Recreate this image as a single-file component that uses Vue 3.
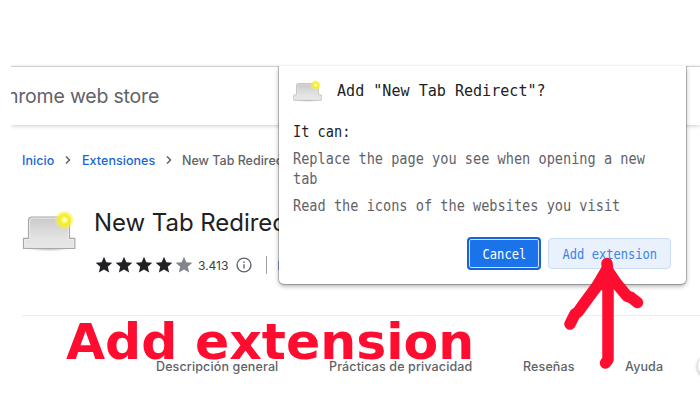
<script setup>
const tabs = [
  { label: 'Descripción general', cls: 'overview' },
  { label: 'Prácticas de privacidad', cls: 'privacy' },
  { label: 'Reseñas', cls: 'reviews' },
  { label: 'Ayuda', cls: 'help' },
]
const stars = [true, true, true, true, false]
</script>

<template>
  <svg class="defs" width="0" height="0">
    <defs>
      <linearGradient id="metal" x1="0" y1="0" x2="0" y2="1">
        <stop offset="0" stop-color="#c9c9c9" />
        <stop offset="0.7" stop-color="#e4e4e4" />
        <stop offset="1" stop-color="#e6e6e6" />
      </linearGradient>
      <radialGradient id="glow">
        <stop offset="0" stop-color="#fffff0" />
        <stop offset="0.2" stop-color="#fffba0" />
        <stop offset="0.42" stop-color="#f8ee1c" />
        <stop offset="0.65" stop-color="#f8ee30" stop-opacity="0.8" />
        <stop offset="1" stop-color="#fbf560" stop-opacity="0" />
      </radialGradient>
      <radialGradient id="floor">
        <stop offset="0" stop-color="#777" stop-opacity="0.5" />
        <stop offset="1" stop-color="#999" stop-opacity="0" />
      </radialGradient>
      <symbol id="tab-icon" viewBox="0 0 56 44">
        <ellipse cx="27" cy="40" rx="23" ry="2.500" fill="url(#floor)" />
        <path d="M1.500 39.300V29.300H6.500V11.500Q6.500 8 10 8H44Q47.500 8 47.500 11.500V29.300H52.800V39.300Z" fill="url(#metal)" stroke="#a8a8a8" stroke-width="1.200" />
        <path d="M2.700 38.200V30.500H7.700V12Q7.700 9.200 10.500 9.200H43.500Q46.300 9.200 46.300 12V30.500H51.600V38.200Z" fill="none" stroke="#ededed" stroke-width="0.900" />
        <circle cx="42.500" cy="11" r="10" fill="url(#glow)" />
      </symbol>
    </defs>
  </svg>
  <main class="shot">
    <section class="store">
      <header class="bar"><span class="brand">chrome web store</span></header>
      <nav class="crumbs">
        <a class="c1">Inicio</a>
        <svg width="6" height="10" viewBox="0 0 6 10"><path d="M1 1.500l3.500 3.500-3.500 3.500" /></svg>
        <a class="c2">Extensiones</a>
        <svg width="6" height="10" viewBox="0 0 6 10"><path d="M1 1.500l3.500 3.500-3.500 3.500" /></svg>
        <span class="c3">New Tab Redirect</span>
      </nav>
      <div class="product">
        <svg class="picture" width="56" height="44"><use href="#tab-icon" /></svg>
        <div class="info">
          <h1>New Tab Redirect</h1>
          <div class="rating">
            <svg v-for="(on, i) in stars" :key="i" class="star" :class="{ off: !on }" width="20" height="20" viewBox="0 0 24 24">
              <path d="M12 17.270 18.180 21l-1.640-7.030L22 9.240l-7.190-.61L12 2 9.190 8.630 2 9.240l5.460 4.730L5.820 21z" />
            </svg>
            <span class="count">3.413</span>
            <svg class="about" width="16" height="16" viewBox="0 0 16 16">
              <circle cx="8" cy="8" r="6.900" /><path d="M8 7.200v4.300M8 4.400v1.500" />
            </svg>
            <i class="sep"></i><i class="link-edge"></i>
          </div>
        </div>
      </div>
      <div class="tabs">
        <span v-for="t in tabs" :key="t.label" :class="t.cls">{{ t.label }}</span>
        <i class="round"></i>
      </div>
    </section>

    <div class="dialog">
      <div class="title">
        <svg width="30" height="24"><use href="#tab-icon" /></svg>
        <span class="mono">Add "New Tab Redirect"?</span>
      </div>
      <div class="can"><span class="mono">It can:</span></div>
      <p class="mono">Replace the page you see when opening a new<br>tab</p>
      <p class="mono second">Read the icons of the websites you visit</p>
      <div class="actions">
        <button class="cancel"><span class="mono">Cancel</span></button>
        <button class="add"><span class="mono">Add extension</span></button>
      </div>
    </div>

    <div class="caption">Add extension</div>
    <svg class="arrow" width="90" height="130" viewBox="0 0 90 130">
      <path class="stem" d="M47 13.500L48 24V109.500L45.500 113" />
      <path class="wing" d="M46 21L37 36L23 55L18 62L15 64L10 74" />
      <path class="wing" d="M48 21L57 34L67 46L71 47.500L77.500 52.500" />
      <path class="head" d="M47 16L41 27L38 34L47 38L56 32Z" />
    </svg>
  </main>
</template>

<style>
body { margin: 0; background: #fff; }
</style>

<style scoped>
.defs { position: absolute; }
.shot { position: relative; width: 700px; height: 400px; overflow: hidden; background: #fff; font-family: Inter, "Open Sans", sans-serif; }
.store { margin-left: 11px; padding-top: 66px; overflow: hidden; }
.bar { box-sizing: border-box; height: 59px; border-top: 1px solid #d0d0d0; overflow: hidden; box-shadow: 0 1px 4px rgba(0,0,0,.2); display: flex; align-items: center; }
.brand { color: #5f6368; font-size: 19.500px; letter-spacing: -.2px; margin-left: -15px; white-space: nowrap; }
.crumbs { display: flex; align-items: center; height: 20px; padding: 25px 0 0 11px; font-size: 12.500px; font-weight: 500; color: #5f6368; white-space: nowrap; }
.crumbs a { color: #1967d2; }
.crumbs svg { fill: none; stroke: #5f6368; stroke-width: 1.500; margin: 0 11px; }
.c1 { width: 32px; letter-spacing: .05px; }
.c2 { width: 73px; letter-spacing: .05px; }
.c3 { margin-left: -1px; }
.product { display: flex; padding-top: 36px; height: 109px; border-bottom: 1px solid #eceef0; margin-left: 11px; }
.picture { margin-top: 3px; }
.info { margin-left: 16px; }
h1 { margin: 0; font-size: 24px; line-height: 34px; font-weight: 400; letter-spacing: -.05px; color: #202124; white-space: nowrap; }
.rating { display: flex; align-items: center; height: 20px; margin-top: 15px; }
.star { fill: #202124; }
.star.off { fill: #80868b; }
.count { font-size: 12px; width: 31px; color: #3c4043; margin-left: 4px; }
.about { fill: none; stroke: #5f6368; stroke-width: 1.400; margin-left: 7px; }
.sep { width: 1px; height: 18px; background: #9aa0a6; margin-left: 14px; }
.link-edge { width: 6px; height: 9px; background: #8ab4f8; margin-left: 11px; }
.tabs { display: flex; align-items: center; height: 30px; padding: 35px 0 0 145px; color: #5f6368; font-size: 12.500px; font-weight: 500; letter-spacing: .13px; white-space: nowrap; }
.tabs > * { flex: none; }
.overview { width: 173px; }
.privacy { width: 194px; }
.reviews { width: 102px; }
.help { width: 72px; }
.round { width: 20px; height: 20px; border-radius: 50%; border: 1px solid #ddd; box-shadow: 0 1px 3px rgba(0,0,0,.3); }

.mono { display: inline-block; font-family: "DejaVu Sans Mono", monospace; transform-origin: left center; white-space: nowrap; }
.dialog { position: absolute; left: 279px; top: 66px; width: 407px; height: 218px; box-sizing: border-box; padding: 11px 15px 0 14px; background: #fff; border-radius: 0 0 5px 5px; box-shadow: 0 0 0 1px rgba(0,0,0,.2), 0 2px 5px rgba(0,0,0,.35); clip-path: inset(0 -10px -12px -10px); }
.title { display: flex; height: 26px; align-items: center; color: #202124; font-size: 16.500px; }
.title svg { margin: 1px 14px 0 0; }
.title .mono { transform: scaleX(.913); }
.can { margin-top: 17px; height: 24px; line-height: 24px; font-size: 15px; color: #202124; }
.can .mono { transform: scaleX(.908); }
p { margin: 5px 0 0; font-size: 15px; line-height: 20px; color: #5f6368; transform: scaleX(.906); }
p.second { margin-top: 7px; }
.actions { display: flex; justify-content: flex-end; gap: 7px; margin-top: 21px; }
button { box-sizing: border-box; height: 32px; padding: 0; border-radius: 4px; display: flex; align-items: center; justify-content: center; font-size: 13.500px; }
button .mono { transform-origin: center; transform: scaleX(.895); flex: none; }
.cancel { width: 74px; height: 33px; border: 2px solid #1a61dc; background: #1a73e8; color: #fff; box-shadow: inset 0 0 0 1px #d2e3fc; }
.add { width: 123px; margin-top: 1px; height: 31px; border: 1px solid #cbdcf6; background: #e9f1fd; color: #3b82e8; }
.caption { position: absolute; left: 66px; top: 312px; font: bold 50.500px/60px "DejaVu Sans", sans-serif; color: #ff0d30; white-space: nowrap; }
.arrow { position: absolute; left: 560px; top: 250px; fill: none; stroke: #ff0d30; stroke-linecap: round; stroke-linejoin: round; }
.stem { stroke-width: 11.500px; }
.wing { stroke-width: 11.500px; }
.head { fill: #ff0d30; stroke-width: 8px; }
</style>
